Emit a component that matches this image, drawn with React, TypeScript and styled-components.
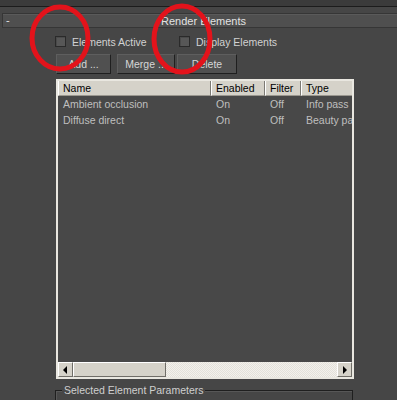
import React from "react";
import styled, { createGlobalStyle } from "styled-components";

const Global = createGlobalStyle`
  html, body { margin: 0; padding: 0; background: #464646; }
  body { font-family: "Liberation Sans", Arial, sans-serif; font-size: 10.5px; }
  #root { width: 397px; height: 400px; overflow: hidden; }
`;

const Page = styled.div`
  position: relative;
  width: 397px;
  height: 400px;
  background: #464646;
  display: flex;
  flex-direction: column;
  overflow: hidden;
`;

const TopStrip = styled.div`
  height: 6px;
  background: #3b3b3b;
  border-bottom: 1px solid #1c1c1c;
  flex-shrink: 0;
`;

const TitleBar = styled.div`
  margin: 6px 0 0 2px;
  height: 13px;
  flex-shrink: 0;
  background: #4f4f4f;
  border-top: 1px solid #363636;
  border-bottom: 1px solid #363636;
  border-left: 1px solid #363636;
  box-shadow: inset 0 1px 0 #5a5a5a;
  display: flex;
  align-items: center;
  position: relative;
  color: #e2e2e2;
  font-size: 11px;
`;

const Collapse = styled.span`
  position: absolute;
  left: 3px;
  top: 0;
  line-height: 13px;
`;

const TitleText = styled.span`
  flex: 1;
  text-align: center;
  padding-left: 7px;
`;

const Content = styled.div`
  padding-left: 55px;
  display: flex;
  flex-direction: column;
`;

const CheckRow = styled.div`
  display: flex;
  align-items: center;
  margin-top: 8px;
  height: 11px;
`;

const CheckItem = styled.label<{ $w: number }>`
  display: flex;
  align-items: center;
  width: ${(p) => p.$w}px;
  color: #d2d2d2;
  gap: 6px;
`;

const Box = styled.span`
  width: 9px;
  height: 9px;
  background: #575757;
  border: 1px solid #2a2a2a;
  box-shadow: inset 1px 1px 0 #4a4a4a;
`;

const ButtonRow = styled.div`
  display: flex;
  margin-top: 7px;
  height: 20px;
`;

const Btn = styled.div<{ $w: number; $ml: number }>`
  width: ${(p) => p.$w}px;
  margin-left: ${(p) => p.$ml}px;
  box-sizing: border-box;
  height: 20px;
  background: #505050;
  border-top: 1px solid #5e5e5e;
  border-left: 1px solid #5e5e5e;
  border-right: 1px solid #1f1f1f;
  border-bottom: 1px solid #1f1f1f;
  color: #d6d6d6;
  display: flex;
  align-items: center;
  justify-content: center;
`;

const List = styled.div`
  margin-top: 5px;
  margin-left: 1px;
  width: 298px;
  height: 300px;
  box-sizing: border-box;
  border: 2px solid #e9e7e0;
  background: #484848;
  display: flex;
  flex-direction: column;
  overflow: hidden;
`;

const Header = styled.div`
  display: flex;
  height: 15px;
  background: #d5d2c9;
  flex-shrink: 0;
`;

const HeadCell = styled.div<{ $w: number }>`
  width: ${(p) => p.$w}px;
  flex-shrink: 0;
  box-sizing: border-box;
  border-left: 1px solid #ffffff;
  border-right: 1px solid #7c7a74;
  border-bottom: 1px solid #9a978f;
  color: #000;
  padding-left: 4px;
  line-height: 14px;
  white-space: nowrap;
  overflow: hidden;
`;

const Body = styled.div`
  flex: 1;
`;

const Row = styled.div`
  display: flex;
  height: 16px;
  align-items: center;
`;

const Cell = styled.div<{ $w: number }>`
  width: ${(p) => p.$w}px;
  flex-shrink: 0;
  padding-left: 5px;
  box-sizing: border-box;
  color: #bfbfbf;
  white-space: nowrap;
  overflow: hidden;
`;

const ScrollBar = styled.div`
  height: 15px;
  display: flex;
  flex-shrink: 0;
  background-color: #eeece6;
  background-image: repeating-conic-gradient(#f3f1ec 0% 25%, #e3e1da 0% 50%);
  background-size: 2px 2px;
`;

const ArrowBtn = styled.div`
  width: 15px;
  height: 15px;
  box-sizing: border-box;
  background: #d5d2c9;
  border-top: 1px solid #fff;
  border-left: 1px solid #fff;
  border-right: 1px solid #6f6d67;
  border-bottom: 1px solid #6f6d67;
  display: flex;
  align-items: center;
  justify-content: center;
`;

const Thumb = styled.div`
  width: 93px;
  height: 15px;
  box-sizing: border-box;
  background: #d5d2c9;
  border-top: 1px solid #fff;
  border-left: 1px solid #fff;
  border-right: 1px solid #6f6d67;
  border-bottom: 1px solid #6f6d67;
`;

const Track = styled.div`
  flex: 1;
`;

const Group = styled.div`
  margin-top: 11px;
  width: 298px;
  height: 30px;
  box-sizing: border-box;
  border: 1px solid #1f1f1f;
  box-shadow: inset 1px 1px 0 #575757;
  position: relative;
`;

const GroupLabel = styled.span`
  position: absolute;
  left: 6px;
  top: -7px;
  padding: 0 2px;
  background: #464646;
  color: #cfcfcf;
  line-height: 13px;
`;

const Overlay = styled.svg`
  position: absolute;
  left: 0;
  top: 0;
  pointer-events: none;
`;

const cols = [153, 54, 36, 80];

const rows = [
  ["Ambient occlusion", "On", "Off", "Info pass"],
  ["Diffuse direct", "On", "Off", "Beauty pass"],
];

export default function App() {
  return (
    <>
      <Global />
      <Page>
        <TopStrip />
        <TitleBar>
          <Collapse>-</Collapse>
          <TitleText>Render Elements</TitleText>
        </TitleBar>
        <Content>
          <CheckRow>
            <CheckItem $w={124}>
              <Box />
              Elements Active
            </CheckItem>
            <CheckItem $w={120}>
              <Box />
              Display Elements
            </CheckItem>
          </CheckRow>
          <ButtonRow>
            <Btn $w={55} $ml={1}>Add ...</Btn>
            <Btn $w={58} $ml={6}>Merge ...</Btn>
            <Btn $w={60} $ml={2}>Delete</Btn>
          </ButtonRow>
          <List>
            <Header>
              {["Name", "Enabled", "Filter", "Type"].map((h, i) => (
                <HeadCell key={h} $w={cols[i]}>{h}</HeadCell>
              ))}
            </Header>
            <Body>
              {rows.map((r) => (
                <Row key={r[0]}>
                  {r.map((c, i) => (
                    <Cell key={i} $w={cols[i]}>{c}</Cell>
                  ))}
                </Row>
              ))}
            </Body>
            <ScrollBar>
              <ArrowBtn>
                <svg width="5" height="8" viewBox="0 0 5 8"><path d="M4 0 L0 4 L4 8 Z" fill="#000" /></svg>
              </ArrowBtn>
              <Thumb />
              <Track />
              <ArrowBtn>
                <svg width="5" height="8" viewBox="0 0 5 8"><path d="M1 0 L5 4 L1 8 Z" fill="#000" /></svg>
              </ArrowBtn>
            </ScrollBar>
          </List>
          <Group>
            <GroupLabel>Selected Element Parameters</GroupLabel>
          </Group>
        </Content>
        <Overlay width="397" height="400" viewBox="0 0 397 400">
          <ellipse cx="60" cy="38" rx="28" ry="31" fill="none" stroke="#e3131b" strokeWidth="5" />
          <ellipse cx="182" cy="39" rx="28" ry="33" fill="none" stroke="#e3131b" strokeWidth="5" />
        </Overlay>
      </Page>
    </>
  );
}
